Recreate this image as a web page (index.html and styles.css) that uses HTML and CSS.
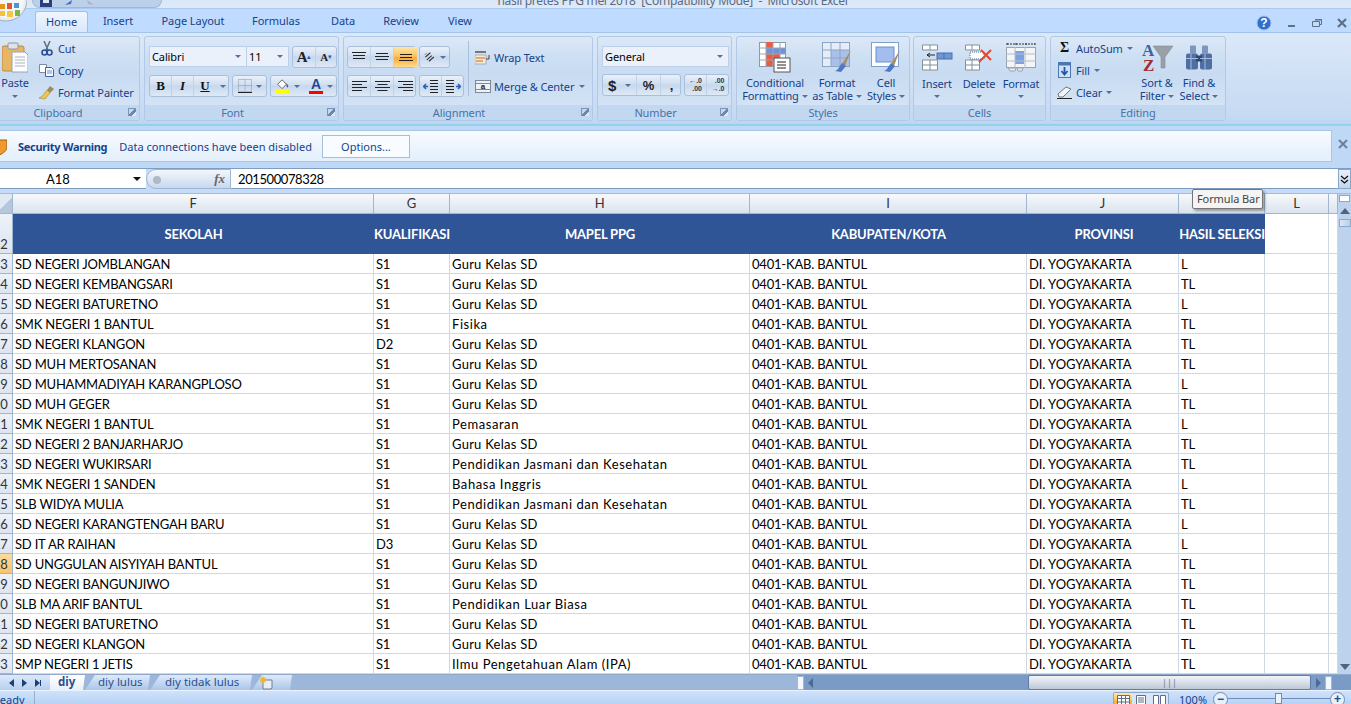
FILE: index.html
```html
<!DOCTYPE html>
<html lang="en">
<head>
<meta charset="utf-8">
<title>hasil pretes PPG mei 2018 - Microsoft Excel</title>
<link rel="stylesheet" href="styles.css">
</head>
<body>
<div class="app">
  <header class="titlebar">
    <div class="qat">
      <svg width="12" height="7" viewBox="0 0 12 7"><rect width="12" height="7" fill="#2b3f7c"/><rect x="3" y="0" width="6" height="3" fill="#dfe8f5"/></svg>
      <svg width="10" height="7" viewBox="0 0 10 7"><path d="M1 5 8 0 7 4Z" fill="#3c6fc0"/></svg>
      <svg width="10" height="7" viewBox="0 0 10 7"><path d="M8 5 1 0 2 4Z" fill="#a9b4c2"/></svg>
    </div>
    <div class="title">hasil pretes PPG mei 2018 &nbsp;[Compatibility Mode] &nbsp;- &nbsp;Microsoft Excel</div>
  </header>
  <svg class="office" width="27" height="25" viewBox="0 0 27 25"><circle cx="6" cy="0" r="21" fill="#e9edf2" stroke="#a7adb5"/><circle cx="6" cy="0" r="18" fill="#f4f6f8"/><rect x="-1" y="4" width="6" height="5" fill="#e8951e"/><rect x="-1" y="11" width="6" height="5" fill="#f3c13c"/><rect x="7" y="11" width="6" height="6" fill="#f5c743"/><rect x="15" y="10" width="5" height="6" fill="#7ab648"/><rect x="7" y="3" width="5" height="6" fill="#e3572d"/><rect x="14" y="3" width="5" height="5" fill="#4f93d8"/></svg>

  <nav class="tabbar">
    <span class="tab active">Home</span>
    <span class="tab t-insert">Insert</span>
    <span class="tab t-layout">Page Layout</span>
    <span class="tab t-formulas">Formulas</span>
    <span class="tab t-data">Data</span>
    <span class="tab t-review">Review</span>
    <span class="tab t-view">View</span>
    <div class="winbtns">
      <svg width="16" height="16" viewBox="0 0 16 16"><circle cx="8" cy="8" r="7" fill="#2f6fd0" stroke="#9fc0ea"/><text x="8" y="12" class="help">?</text></svg>
      <svg width="10" height="10" viewBox="0 0 10 10"><rect x="1" y="7" width="7" height="2" fill="#5f7186"/></svg>
      <svg width="10" height="10" viewBox="0 0 10 10"><path d="M3 1.500h6.500v5H8M.5 3.500h7v5h-7z" fill="none" stroke="#5f7186"/><rect x="3" y="1" width="7" height="1.500" fill="#5f7186"/></svg>
      <svg width="10" height="10" viewBox="0 0 10 10"><path d="M1 1l8 8M9 1 1 9" stroke="#5f7186" stroke-width="2.200"/></svg>
    </div>
  </nav>

  <section class="ribbon">
    <div class="group g-clip">
      <div class="gbody clipbody">
        <div class="bigbtn paste">
          <svg width="26" height="31" viewBox="0 0 26 31"><rect x="0" y="4" width="22" height="25" rx="2" fill="#e8b565" stroke="#b98a45"/><rect x="6" y="1" width="10" height="6" rx="1" fill="#dfe3e8" stroke="#8d96a3"/><path d="M10 10h13l3 3v17H10z" fill="#fdfdfd" stroke="#9aa5b4"/><path d="M13 15h10M13 18h10M13 21h10M13 24h10" stroke="#aab4c1"/></svg>
          <span class="btxt">Paste</span>
          <i class="caret"></i>
        </div>
        <div class="stack">
          <div class="sm"><svg width="16" height="15" viewBox="-1 0 16 15"><path d="M4 0l4 9M10 0 6 9" stroke="#5d6f86" stroke-width="1.500"/><circle cx="4.500" cy="11.500" r="2.500" fill="none" stroke="#2a4f96" stroke-width="1.600"/><circle cx="9.500" cy="11.500" r="2.500" fill="none" stroke="#2a4f96" stroke-width="1.600"/></svg><span>Cut</span></div>
          <div class="sm"><svg width="16" height="13" viewBox="0 0 16 13"><path d="M.5.500h7v8h-7z" fill="#fff" stroke="#7b8ca3"/><path d="M6.500 3.500h6l2 2v7h-8z" fill="#f3f7fc" stroke="#3f66a3"/><path d="M8 7h5M8 9h5" stroke="#6e95c9"/></svg><span>Copy</span></div>
          <div class="sm"><svg width="16" height="15" viewBox="0 0 16 15"><path d="M11 1l4 3-4 4-3-3z" fill="#9a8c63"/><path d="M8 5l3 3-5 6-6-1c3-1 4-3 8-8z" fill="#eec64e" stroke="#a68a2c" stroke-width=".6"/></svg><span>Format Painter</span></div>
        </div>
      </div>
      <div class="glabel lb">Clipboard<i class="launch"></i></div>
    </div>

    <div class="group g-font">
      <div class="gbody vbody">
        <div class="frow">
          <div class="combo c-font"><span>Calibri</span><i class="caret"></i></div>
          <div class="combo c-size"><span>11</span><i class="caret"></i></div>
          <div class="btngrp w45">
            <b class="cell grow">A<sup>▴</sup></b><b class="cell shrink">A<sup>▾</sup></b>
          </div>
        </div>
        <div class="frow">
          <div class="btngrp w80"><b class="cell c22 serif">B</b><b class="cell c22 serif it">I</b><b class="cell c22 serif un">U</b><i class="caret"></i></div>
          <div class="btngrp w35 b-border"><svg width="14" height="14" viewBox="0 0 14 14"><path d="M.5.500h13v12h-13zM7 .5v12M.5 6.500h13" fill="none" stroke="#8a95a5" stroke-dasharray="1 1"/><path d="M0 13.500h14" stroke="#222"/></svg><i class="caret"></i></div>
          <div class="btngrp w67 b-colors">
            <svg width="17" height="16" viewBox="0 0 17 16"><path d="M3 6l5-5 5 5-5 5z" fill="#fff" stroke="#555"/><path d="M13 5c2 2 3 4 1 5-1-1-1-3-1-5z" fill="#3260a8"/><rect y="12" width="16" height="4" fill="#ffff00"/></svg><i class="caret"></i>
            <span class="fcolor">A</span><i class="caret"></i>
          </div>
        </div>
      </div>
      <div class="glabel lb">Font<i class="launch"></i></div>
    </div>

    <div class="group g-align">
      <div class="gbody albody">
        <div class="alcol">
          <div class="frow">
            <div class="btngrp w68 tight">
              <b class="cell c23"><svg width="14" height="10" viewBox="0 0 14 10"><path d="M0 .5h14M1 3.500h12M1 6.500h12" stroke="#222"/></svg></b>
              <b class="cell c23"><svg width="14" height="10" viewBox="0 0 14 10"><path d="M1 1.500h12M0 4.500h14M1 7.500h12" stroke="#222"/></svg></b>
              <b class="cell c23 on"><svg width="14" height="10" viewBox="0 0 14 10"><path d="M1 2.500h12M1 5.500h12M0 8.500h14" stroke="#222"/></svg></b>
            </div>
            <div class="btngrp w31"><svg width="17" height="14" viewBox="0 0 17 14"><path d="M2 7 9 1M4 11l7-6M7 13l7-6" stroke="#333" stroke-width="1.500"/><path d="M1 4l3-3" stroke="#555"/></svg><i class="caret"></i></div>
          </div>
          <div class="frow">
            <div class="btngrp w68 tight">
              <b class="cell c23"><svg width="15" height="11" viewBox="0 0 15 11"><path d="M0 .5h15M0 3.500h10M0 6.500h15M0 9.500h10" stroke="#222"/></svg></b>
              <b class="cell c23"><svg width="15" height="11" viewBox="0 0 15 11"><path d="M0 .5h15M2.500 3.500h10M0 6.500h15M2.500 9.500h10" stroke="#222"/></svg></b>
              <b class="cell c23"><svg width="15" height="11" viewBox="0 0 15 11"><path d="M0 .5h15M5 3.500h10M0 6.500h15M5 9.500h10" stroke="#222"/></svg></b>
            </div>
            <div class="btngrp w45 tight">
              <b class="cell c22"><svg width="15" height="13" viewBox="0 0 15 13"><path d="M7 .5h8M7 3.500h8M7 6.500h8M7 9.500h8M7 12.500h8" stroke="#222"/><path d="M5 6.500H1M3 4 .5 6.500 3 9" stroke="#2a5cb0" fill="none" stroke-width="1.500"/></svg></b>
              <b class="cell c22"><svg width="15" height="13" viewBox="0 0 15 13"><path d="M0 .5h8M0 3.500h8M0 6.500h8M0 9.500h8M0 12.500h8" stroke="#222"/><path d="M10 6.500h4M12 4l2.500 2.500L12 9" stroke="#2a5cb0" fill="none" stroke-width="1.500"/></svg></b>
            </div>
          </div>
        </div>
        <div class="vsep"></div>
        <div class="alcol2">
          <div class="sm"><svg width="16" height="15" viewBox="0 0 16 15"><rect y="1" width="11" height="2" fill="#777"/><rect y="5" width="11" height="9" fill="#f6ead6" stroke="#8a8a8a" stroke-width=".6"/><path d="M1 8h9M1 11h7" stroke="#c36a1e"/><path d="M14 5v4h-3" stroke="#444" fill="none"/></svg><span>Wrap Text</span></div>
          <div class="sm"><svg width="16" height="15" viewBox="0 0 16 15"><rect x=".5" y="1.500" width="15" height="12" fill="#eef2f7" stroke="#7e8a99"/><path d="M.5 4.500h15M.5 10.500h15" stroke="#7e8a99"/><text x="8" y="10" class="a-ico">a</text></svg><span>Merge &amp; Center</span><i class="caret"></i></div>
        </div>
      </div>
      <div class="glabel lb">Alignment<i class="launch"></i></div>
    </div>

    <div class="group g-num">
      <div class="gbody vbody">
        <div class="frow"><div class="combo c-gen"><span>General</span><i class="caret"></i></div></div>
        <div class="frow">
          <div class="btngrp w79 tight"><b class="cell c34 dollar">$<i class="caret"></i></b><b class="cell c24 pct">%</b><b class="cell c21 pct">,</b></div>
          <div class="btngrp w45 tight">
            <b class="cell c22 dec"><span>←.0<br>.00</span></b><b class="cell c22 dec"><span>.00<br>→.0</span></b>
          </div>
        </div>
      </div>
      <div class="glabel lb">Number<i class="launch"></i></div>
    </div>

    <div class="group g-styles">
      <div class="gbody bigs">
        <div class="bigbtn b76">
          <svg width="32" height="31" viewBox="0 0 32 31"><rect x=".5" y=".5" width="26" height="24" fill="#fff" stroke="#8d99a8"/><rect x="7" y="0" width="7" height="6" fill="#ee5a3c"/><rect x="7" y="6" width="20" height="6" fill="#6f93d9"/><rect x="7" y="12" width="14" height="6" fill="#ee5a3c"/><rect x="7" y="18" width="7" height="6" fill="#ee5a3c"/><path d="M7 0v25M14 0v25M21 0v25M0 6h27M0 12h27M0 18h27" stroke="#9aa6b5" fill="none"/><rect x="15" y="16" width="16" height="14" fill="#fff" stroke="#555"/><path d="M18 20h9M18 23h9M18 26h9" stroke="#222"/></svg>
          <span class="btxt">Conditional<br>Formatting<i class="caret inl"></i></span>
        </div>
        <div class="bigbtn b48">
          <svg width="30" height="31" viewBox="0 0 30 31"><rect x=".5" y=".5" width="27" height="24" fill="#e5edf8" stroke="#8da4c4"/><rect x="9" y="8" width="18" height="16" fill="#a9c1e8"/><path d="M9 0v25M18 0v25M0 8h28M0 16h28" stroke="#8da4c4"/><path d="M29 8 20 22l3 2z" fill="#a78d5a"/><path d="M20 21l4 3-5 6-6-1c3-1 4-4 7-8z" fill="#4d79c7"/></svg>
          <span class="btxt">Format<br>as Table<i class="caret inl"></i></span>
        </div>
        <div class="bigbtn b48">
          <svg width="30" height="31" viewBox="0 0 30 31"><rect x=".5" y=".5" width="27" height="24" fill="#fff" stroke="#7fa0cc"/><rect x="5" y="5" width="18" height="15" fill="#a3bdee" stroke="#6b8fd0"/><path d="M29 8 20 22l3 2z" fill="#a78d5a"/><path d="M20 21l4 3-5 6-6-1c3-1 4-4 7-8z" fill="#4d79c7"/></svg>
          <span class="btxt">Cell<br>Styles<i class="caret inl"></i></span>
        </div>
      </div>
      <div class="glabel">Styles</div>
    </div>

    <div class="group g-cells">
      <div class="gbody bigs">
        <div class="bigbtn b42">
          <svg width="31" height="27" viewBox="0 0 31 27"><path d="M.5 1h15v5H.5zM8 1v5M.5 16h15v10H.5zM.5 21h15M8 16v10" fill="#fff" stroke="#848f9c"/><rect x="15" y="9" width="15" height="6" fill="#6f97d8" stroke="#4a6ea8"/><path d="M22 9v6" stroke="#4a6ea8"/><path d="M13 11H5M8 9l-3 2 3 2" stroke="#222" fill="none"/></svg>
          <span class="btxt">Insert<br><i class="caret"></i></span>
        </div>
        <div class="bigbtn b42">
          <svg width="28" height="27" viewBox="0 0 28 27"><path d="M.5 1h14v5H.5zM7 1v5M.5 16h14v10H.5zM.5 21h14M7 16v10" fill="#fff" stroke="#848f9c"/><path d="M5 8h14v7H5z" fill="#fff" stroke="#4a6ea8" stroke-dasharray="1 1"/><path d="M16 6l10 10M26 6 14 18" stroke="#e8452a" stroke-width="2"/></svg>
          <span class="btxt">Delete<br><i class="caret"></i></span>
        </div>
        <div class="bigbtn b42">
          <svg width="30" height="29" viewBox="0 0 30 29"><path d="M1 1h28M1 0v3M29 0v3M10 0v3M20 0v3" stroke="#333" stroke-dasharray="2 1"/><rect x=".5" y="4.500" width="29" height="20" fill="#f3f5f8" stroke="#9aa4b1"/><rect x="9" y="8" width="9" height="13" fill="#7ea1e4"/><path d="M9 4v21M19 4v21M0 11h30M0 18h30" stroke="#b4bcc7"/><path d="M2 25h8l-1 3H4zM11 25h6l-1 3h-4z" fill="#e8ecf2" stroke="#9aa4b1"/></svg>
          <span class="btxt">Format<br><i class="caret"></i></span>
        </div>
      </div>
      <div class="glabel">Cells</div>
    </div>

    <div class="group g-edit">
      <div class="gbody editbody">
        <div class="stack estack">
          <div class="sm"><span class="sigma">Σ</span><span>AutoSum</span><i class="caret"></i></div>
          <div class="sm"><svg width="13" height="16" viewBox="0 0 13 16"><rect x=".5" y=".5" width="12" height="15" fill="#cfe0f7" stroke="#4a77b8"/><rect x=".5" y=".5" width="12" height="3" fill="#4a77b8"/><path d="M6.500 5v7M3.500 9l3 3.500 3-3.500" stroke="#2256a8" stroke-width="1.800" fill="none"/></svg><span>Fill</span><i class="caret"></i></div>
          <div class="sm"><svg width="15" height="13" viewBox="0 0 15 13"><path d="M1 8l8-7 5 2-8 8H2z" fill="#f1f3f6" stroke="#6e7886"/><path d="M0 12.500h15" stroke="#222"/></svg><span>Clear</span><i class="caret"></i></div>
        </div>
        <div class="bigbtn b42">
          <svg width="31" height="29" viewBox="0 0 31 29"><path d="M11 3h20l-8 11v11h-4V14z" fill="#9aa0a8" stroke="#7a7f86" stroke-width=".5"/><text x="0" y="13" class="sa">A</text><text x="1" y="28" class="sz">Z</text></svg>
          <span class="btxt">Sort &amp;<br>Filter<i class="caret inl"></i></span>
        </div>
        <div class="bigbtn b42">
          <svg width="28" height="26" viewBox="0 0 28 26"><rect x="5" y="1" width="6" height="8" rx="1" fill="#7e96bd"/><rect x="17" y="1" width="6" height="8" rx="1" fill="#7e96bd"/><rect x="1" y="9" width="12" height="16" rx="2" fill="#4f6ea3"/><rect x="15" y="9" width="12" height="16" rx="2" fill="#4f6ea3"/><rect x="11" y="11" width="6" height="6" fill="#2e4773"/><path d="M1 14h12M15 14h12M6 9v16M20 9v16" stroke="#a8bddc"/></svg>
          <span class="btxt">Find &amp;<br>Select<i class="caret inl"></i></span>
        </div>
      </div>
      <div class="glabel">Editing</div>
    </div>
  </section>

  <section class="msgbar">
    <div class="msgpanel">
      <svg class="shield" width="7" height="16" viewBox="0 0 7 16"><path d="M-6 1h13v7c0 4-4 6-7 8z" fill="#ee9a2e" stroke="#a55f10"/></svg>
      <strong>Security Warning</strong>
      <span>Data connections have been disabled</span>
      <span class="optbtn">Options...</span>
    </div>
    <svg class="msgclose" width="10" height="10" viewBox="0 0 10 10"><path d="M1 1l8 8M9 1 1 9" stroke="#6d8098" stroke-width="2"/></svg>
  </section>

  <section class="fbar">
    <div class="namebox"><span>A18</span><i class="caret dark"></i></div>
    <div class="fxbtn"><i class="knob"></i><em>fx</em></div>
    <div class="finput">201500078328</div>
    <div class="fexpand"><svg width="9" height="9" viewBox="0 0 9 9"><path d="M1 1l3.500 3L8 1M1 5l3.500 3L8 5" fill="none" stroke="#111" stroke-width="1.300"/></svg></div>
  </section>

  <main class="gridwrap">
    <table class="sheet">
      <colgroup><col class="c-rh"><col class="c-f"><col class="c-g"><col class="c-h"><col class="c-i"><col class="c-j"><col class="c-k"><col class="c-l"><col></colgroup>
      <thead>
        <tr class="colhead"><th class="corner"></th><th>F</th><th>G</th><th>H</th><th>I</th><th>J</th><th>K</th><th>L</th><th></th></tr>
      </thead>
      <tbody>
        <tr class="hdr"><th class="rh"><span>12</span></th><td>SEKOLAH</td><td class="nw">KUALIFIKASI</td><td>MAPEL PPG</td><td>KABUPATEN/KOTA</td><td class="prov">PROVINSI</td><td class="nw">HASIL SELEKSI</td><td class="plain"></td><td class="plain"></td></tr>
        <tr><th class="rh"><span>13</span></th><td>SD NEGERI JOMBLANGAN</td><td>S1</td><td>Guru Kelas SD</td><td>0401-KAB. BANTUL</td><td>DI. YOGYAKARTA</td><td>L</td><td></td><td></td></tr>
        <tr><th class="rh"><span>14</span></th><td>SD NEGERI KEMBANGSARI</td><td>S1</td><td>Guru Kelas SD</td><td>0401-KAB. BANTUL</td><td>DI. YOGYAKARTA</td><td>TL</td><td></td><td></td></tr>
        <tr><th class="rh"><span>15</span></th><td>SD NEGERI BATURETNO</td><td>S1</td><td>Guru Kelas SD</td><td>0401-KAB. BANTUL</td><td>DI. YOGYAKARTA</td><td>L</td><td></td><td></td></tr>
        <tr><th class="rh"><span>16</span></th><td>SMK NEGERI 1 BANTUL</td><td>S1</td><td class="lc">Fisika</td><td>0401-KAB. BANTUL</td><td>DI. YOGYAKARTA</td><td>TL</td><td></td><td></td></tr>
        <tr><th class="rh"><span>17</span></th><td>SD NEGERI KLANGON</td><td>D2</td><td>Guru Kelas SD</td><td>0401-KAB. BANTUL</td><td>DI. YOGYAKARTA</td><td>TL</td><td></td><td></td></tr>
        <tr><th class="rh"><span>18</span></th><td>SD MUH MERTOSANAN</td><td>S1</td><td>Guru Kelas SD</td><td>0401-KAB. BANTUL</td><td>DI. YOGYAKARTA</td><td>TL</td><td></td><td></td></tr>
        <tr><th class="rh"><span>19</span></th><td>SD MUHAMMADIYAH KARANGPLOSO</td><td>S1</td><td>Guru Kelas SD</td><td>0401-KAB. BANTUL</td><td>DI. YOGYAKARTA</td><td>L</td><td></td><td></td></tr>
        <tr><th class="rh"><span>20</span></th><td>SD MUH GEGER</td><td>S1</td><td>Guru Kelas SD</td><td>0401-KAB. BANTUL</td><td>DI. YOGYAKARTA</td><td>TL</td><td></td><td></td></tr>
        <tr><th class="rh"><span>21</span></th><td>SMK NEGERI 1 BANTUL</td><td>S1</td><td class="lc">Pemasaran</td><td>0401-KAB. BANTUL</td><td>DI. YOGYAKARTA</td><td>L</td><td></td><td></td></tr>
        <tr><th class="rh"><span>22</span></th><td>SD NEGERI 2 BANJARHARJO</td><td>S1</td><td>Guru Kelas SD</td><td>0401-KAB. BANTUL</td><td>DI. YOGYAKARTA</td><td>TL</td><td></td><td></td></tr>
        <tr><th class="rh"><span>23</span></th><td>SD NEGERI WUKIRSARI</td><td>S1</td><td class="lc">Pendidikan Jasmani dan Kesehatan</td><td>0401-KAB. BANTUL</td><td>DI. YOGYAKARTA</td><td>TL</td><td></td><td></td></tr>
        <tr><th class="rh"><span>24</span></th><td>SMK NEGERI 1 SANDEN</td><td>S1</td><td class="lc">Bahasa Inggris</td><td>0401-KAB. BANTUL</td><td>DI. YOGYAKARTA</td><td>L</td><td></td><td></td></tr>
        <tr><th class="rh"><span>25</span></th><td>SLB WIDYA MULIA</td><td>S1</td><td class="lc">Pendidikan Jasmani dan Kesehatan</td><td>0401-KAB. BANTUL</td><td>DI. YOGYAKARTA</td><td>TL</td><td></td><td></td></tr>
        <tr><th class="rh"><span>26</span></th><td>SD NEGERI KARANGTENGAH BARU</td><td>S1</td><td>Guru Kelas SD</td><td>0401-KAB. BANTUL</td><td>DI. YOGYAKARTA</td><td>L</td><td></td><td></td></tr>
        <tr><th class="rh"><span>27</span></th><td>SD IT AR RAIHAN</td><td>D3</td><td>Guru Kelas SD</td><td>0401-KAB. BANTUL</td><td>DI. YOGYAKARTA</td><td>L</td><td></td><td></td></tr>
        <tr><th class="rh sel"><span>28</span></th><td>SD UNGGULAN AISYIYAH BANTUL</td><td>S1</td><td>Guru Kelas SD</td><td>0401-KAB. BANTUL</td><td>DI. YOGYAKARTA</td><td>TL</td><td></td><td></td></tr>
        <tr><th class="rh"><span>29</span></th><td>SD NEGERI BANGUNJIWO</td><td>S1</td><td>Guru Kelas SD</td><td>0401-KAB. BANTUL</td><td>DI. YOGYAKARTA</td><td>TL</td><td></td><td></td></tr>
        <tr><th class="rh"><span>30</span></th><td>SLB MA ARIF BANTUL</td><td>S1</td><td class="lc">Pendidikan Luar Biasa</td><td>0401-KAB. BANTUL</td><td>DI. YOGYAKARTA</td><td>TL</td><td></td><td></td></tr>
        <tr><th class="rh"><span>31</span></th><td>SD NEGERI BATURETNO</td><td>S1</td><td>Guru Kelas SD</td><td>0401-KAB. BANTUL</td><td>DI. YOGYAKARTA</td><td>TL</td><td></td><td></td></tr>
        <tr><th class="rh"><span>32</span></th><td>SD NEGERI KLANGON</td><td>S1</td><td>Guru Kelas SD</td><td>0401-KAB. BANTUL</td><td>DI. YOGYAKARTA</td><td>TL</td><td></td><td></td></tr>
        <tr><th class="rh"><span>33</span></th><td>SMP NEGERI 1 JETIS</td><td>S1</td><td class="lc">Ilmu Pengetahuan Alam (IPA)</td><td>0401-KAB. BANTUL</td><td>DI. YOGYAKARTA</td><td>TL</td><td></td><td></td></tr>
      </tbody>
    </table>
    <aside class="vscroll">
      <i class="vsplit"></i>
      <i class="arrow-up"></i>
      <i class="vthumb"></i>
      <i class="vspace"></i>
      <i class="arrow-down"></i>
    </aside>
  </main>
  <div class="tooltip">Formula Bar</div>

  <section class="sheetbar">
    <div class="sheetnav">
      <i class="nl"></i><i class="nr"></i><i class="ne"></i>
    </div>
    <span class="stab cur">diy</span>
    <span class="stab">diy lulus</span>
    <span class="stab">diy tidak lulus</span>
    <span class="stab newtab"><svg width="15" height="14" viewBox="0 0 15 14"><path d="M4 4h9v8l-1 1H4z" fill="#e8eef7" stroke="#6c7f98"/><path d="M4 0l1 2 2-1-1 2 2 1-2 1 1 2-2-1-1 2-1-2-2 1 1-2-2-1 2-1-1-2 2 1z" fill="#f2b330"/></svg></span>
    <div class="sbfill"></div>
    <div class="hscroll">
      <i class="hsplit"></i>
      <i class="hleft"></i>
      <div class="htrack"></div>
      <div class="hthumb"><span>|||</span></div>
      <i class="hright"></i>
      <i class="hsplit"></i>
    </div>
  </section>

  <footer class="status">
    <span class="ready">Ready</span>
    <div class="views">
      <b class="vb on"><svg width="13" height="11" viewBox="0 0 13 11"><path d="M.5.500h12v10H.5zM.5 3.500h12M.5 7h12M4.500.5v10M8.500.5v10" fill="#fff" stroke="#5c6f88"/></svg></b>
      <b class="vb"><svg width="10" height="11" viewBox="0 0 10 11"><path d="M.5.500h9v10h-9z" fill="#fff" stroke="#5c6f88"/><path d="M2 3h6M2 5h6M2 7h6" stroke="#5c6f88"/></svg></b>
      <b class="vb"><svg width="13" height="11" viewBox="0 0 13 11"><path d="M.5.500h5v10h-5zM7.500.5h5v10h-5z" fill="#fff" stroke="#5c6f88"/></svg></b>
    </div>
    <span class="zoomtxt">100%</span>
    <i class="zbtn">−</i>
    <div class="zslider"><i class="zthumb"></i></div>
    <i class="zbtn">+</i>
  </footer>
</div>
</body>
</html>
```
FILE: styles.css
```css
* { box-sizing: border-box; }
html, body { margin: 0; height: 100%; overflow: hidden; }
body { font-family: "Noto Sans", "Open Sans", sans-serif; font-size: 11px; color: #15428b; background: #bfdbff; }
.app { position: relative; width: 1351px; height: 704px; display: flex; flex-direction: column; overflow: hidden; }
i { display: block; font-style: normal; }

/* title */
.titlebar { height: 9px; flex: none; position: relative; display: flex; background: linear-gradient(#d9e7f9, #dfe9f6); border-bottom: 1px solid #a9c9f0; overflow: hidden; }
.qat { width: 130px; height: 8px; margin-left: 32px; padding-left: 7px; display: flex; gap: 12px; background: #bcd0ea; border-radius: 0 0 12px 12px; border: 1px solid #9eb8d8; border-top: 0; }
.title { position: absolute; left: 0; right: 6px; top: -7px; text-align: center; color: #5c6b80; font-size: 12px; letter-spacing: -.32px; line-height: 16px; white-space: nowrap; }
.office { position: absolute; left: 0; top: 0; z-index: 3; }

/* tabs */
.tabbar { height: 24px; flex: none; display: flex; align-items: flex-end; background: #bfdbff; border-bottom: 1px solid #a3c4ea; padding-left: 35px; position: relative; }
.tab { display: block; height: 21px; line-height: 20px; text-align: center; white-space: nowrap; font-size: 11px; letter-spacing: -.05px; }
.tab.active { width: 53px; margin-right: 10px; background: linear-gradient(#f0f6fe, #d9e8fb); border: 1px solid #a3c0e4; border-bottom: 0; border-radius: 3px 3px 0 0; }
.t-insert { width: 40px; margin-right: 17px; }
.t-layout { width: 76px; margin-right: 14px; }
.t-formulas { width: 62px; margin-right: 20px; }
.t-data { width: 32px; margin-right: 22px; }
.t-review { width: 40px; margin-right: 25px; }
.t-view { width: 28px; }
.winbtns { margin-left: auto; height: 24px; padding: 4px 4px 0 0; display: flex; gap: 15px; align-items: center; align-self: flex-start; }
.help { font: bold 12px "Liberation Sans", sans-serif; fill: #fff; text-anchor: middle; }

/* ribbon */
.ribbon { height: 92px; flex: none; display: flex; gap: 4px; padding: 3px 0 0; background: linear-gradient(#dbe8f8, #c6daf3 90%, #bdd6f4); border-bottom: 1px solid #8fd0e8; overflow: hidden; letter-spacing: -.12px; }
.group { flex: none; height: 85px; border: 1px solid #b1c9e6; border-radius: 3px; display: flex; flex-direction: column; background: linear-gradient(#dce8f7, #cddff3 25%, #c8dbf1 45%, #d9e7f7); }
.gbody { height: 68px; flex: none; }
.glabel { height: 15px; flex: 1; position: relative; background: #c1d8f0; color: #4a72a8; text-align: center; font-size: 11px; line-height: 15px; }
.glabel.lb { padding-right: 18px; }
.launch { position: absolute; right: 3px; top: 3px; width: 8px; height: 8px; border: 1px solid #7b93b4; border-width: 1px 0 0 1px; background: linear-gradient(135deg, transparent 40%, #6e87aa 40%, #6e87aa 70%, #dce8f6 70%); }
.g-clip { width: 146px; margin-left: -6px; }
.g-font { width: 195px; }
.g-align { width: 250px; }
.g-num { width: 135px; }
.g-styles { width: 174px; margin-right: -1px; }
.g-cells { width: 133px; }
.g-edit { width: 176px; }

.clipbody { display: flex; padding-left: 7px; }
.bigbtn { display: flex; flex-direction: column; align-items: center; padding-top: 5px; font-size: 11px; text-align: center; line-height: 13px; flex: none; }
.bigbtn svg { height: 31px; flex: none; }
.btxt { display: block; margin-top: 3px; white-space: nowrap; }
.paste { width: 26px; }
.paste .caret { margin-top: 6px; }
.stack { margin-left: 11px; display: flex; flex-direction: column; }
.clipbody .stack { margin-left: 11px; }
.clipbody .sm { gap: 3px; }
.clipbody .sm svg { flex: none; }
.sm { height: 22px; display: flex; align-items: center; gap: 6px; white-space: nowrap; font-size: 11px; }
.caret { width: 0; height: 0; border: 3px solid transparent; border-top: 3px solid #54719e; border-bottom: 0; flex: none; }
.caret.inl { display: inline-block; margin-left: 3px; vertical-align: 2px; }
.caret.dark { border-top-color: #111; border-width: 4px 4px 0; }

.vbody { padding: 9px 0 0 4px; display: flex; flex-direction: column; gap: 7px; }
.frow { display: flex; gap: 3px; }
.combo { height: 21px; background: #eaf1fb; border: 1px solid #bcd0e8; display: flex; align-items: center; justify-content: space-between; padding: 0 5px 0 2px; color: #000; font-size: 11px; }
.c-font { width: 97px; border-right: 0; }
.c-size { width: 43px; margin-left: -3px; }
.c-gen { width: 127px; }
.btngrp { height: 22px; border: 1px solid #a9c0dc; border-radius: 3px; display: flex; align-items: center; background: linear-gradient(#e9f1fb, #d0def0 45%, #c6d8ee 50%, #dfe9f6); padding-right: 3px; color: #222; }
.btngrp .caret { margin-left: 4px; }
.w45 { width: 45px; } .w80 { width: 80px; } .w35 { width: 35px; } .w67 { width: 67px; }
.w68 { width: 69px; } .w31 { width: 31px; } .w79 { width: 79px; }
.tight { padding-right: 0; }
.cell { height: 20px; display: flex; align-items: center; justify-content: center; border-right: 1px solid #c1d2e7; font-weight: normal; flex: none; }
.cell:last-of-type { border-right: 0; }
.c22 { width: 22px; } .c23 { width: 23px; } .c24 { width: 24px; } .c21 { width: 21px; } .c34 { width: 34px; }
.serif { font: bold 13px "Liberation Serif", serif; color: #111; }
.it { font-style: italic; }
.un { text-decoration: underline; }
.grow { width: 23px; font: bold 15px "Liberation Serif", serif; color: #222; position: relative; }
.shrink { width: 20px; font: bold 11px "Liberation Serif", serif; color: #222; }
.grow sup, .shrink sup { font: 7px "Liberation Sans", sans-serif; color: #2a5cb0; vertical-align: 6px; line-height: 0; }
.b-border { padding-left: 5px; }
.b-colors { padding-left: 4px; }
.fcolor { margin-left: 9px; width: 16px; text-align: center; font: bold 14px/13px "Liberation Sans", sans-serif; color: #234a93; border-bottom: 3px solid #f00; }
.on { background: linear-gradient(#fde6a9, #fbc35c 45%, #f9a93a 55%, #fddc8d); }

.albody { display: flex; padding: 9px 0 0 3px; }
.alcol { display: flex; flex-direction: column; gap: 7px; width: 118px; flex: none; }
.b-border svg { flex: none; }
.w31 { padding-left: 4px; }
.vsep { width: 1px; height: 55px; margin: -5px 0 0 3px; background: #a9c0dc; }
.alcol2 { margin-left: 6px; display: flex; flex-direction: column; gap: 7px; }
.alcol2 .sm { gap: 3px; }
.alcol2 .caret { margin-left: 2px; }
.a-ico { font: bold 8px "Liberation Sans", sans-serif; fill: #222; text-anchor: middle; }

.dollar { font: bold 15px "Liberation Sans", sans-serif; gap: 5px; }
.pct { font: bold 13px "Liberation Sans", sans-serif; }
.dec { font: bold 7px/8px "Liberation Sans", sans-serif; color: #333; text-align: right; }

.bigs { display: flex; }
.b76 { width: 76px; }
.b48 { width: 48px; }
.g-styles .b48 + .b48 { width: 50px; }
.b42 { width: 42px; }
.g-cells .bigs { padding-left: 2px; }
.g-cells .b42 .caret { margin: 5px auto 0; }
.g-cells .btxt { margin-top: 4px; }

.editbody { display: flex; padding-left: 6px; }
.estack { margin-left: 0; width: 79px; flex: none; }
.estack .sm { gap: 4px; }
.estack .sm svg { width: 15px; }
.sigma { width: 15px; font: bold 14px "Liberation Serif", serif; color: #111; text-align: center; }
.sa { font: bold 17px "Liberation Serif", serif; fill: #3e62a0; }
.sz { font: bold 17px "Liberation Serif", serif; fill: #9c2f2f; }

/* message bar */
.msgbar { height: 43px; flex: none; display: flex; align-items: center; background: #bfd8f6; border-top: 1px solid #a9c9f0; padding-bottom: 2px; }
.msgpanel { width: 1332px; height: 32px; display: flex; align-items: center; gap: 12px; background: linear-gradient(#f7fbff, #e3effb); border: 1px solid #a9c5e4; border-left: 0; font-size: 11px; padding-top: 1px; }
.msgpanel strong { font-size: 11px; margin-left: -1px; letter-spacing: -.3px; white-space: nowrap; }
.shield { flex: none; }
.optbtn { width: 88px; height: 23px; line-height: 21px; margin-left: -2px; text-align: center; border: 1px solid #a3bfdc; background: #f8fbff; }
.msgclose { margin-left: 6px; margin-top: -4px; }

/* formula bar */
.fbar { height: 25px; flex: none; display: flex; background: #c5dbf7; border-top: 1px solid #7f9dc2; padding-bottom: 4px; }
.namebox { width: 146px; display: flex; align-items: center; padding: 0 5px 0 46px; justify-content: space-between; color: #000; font: 13px "Lato", sans-serif; background: #fff; border-bottom: 1px solid #7f9dc2; }
.fxbtn { width: 85px; position: relative; background: linear-gradient(#f3f7fd, #c7d8ef); border-radius: 11px 0 0 11px; border: 1px solid #9fb6d3; }
.knob { position: absolute; left: 6px; top: 6px; width: 8px; height: 8px; border-radius: 50%; background: #aeb9c6; }
.fxbtn em { position: absolute; right: 5px; top: 1px; font: italic bold 13px "Liberation Serif", serif; color: #666; }
.finput { flex: 1; padding: 2px 0 0 7px; color: #000; font: 13px/16px "Lato", sans-serif; letter-spacing: -.4px; background: #fff; border-bottom: 1px solid #7f9dc2; }
.fexpand { width: 13px; display: flex; align-items: center; justify-content: center; background: linear-gradient(#e8f0fa, #c4d6ee); border: 1px solid #8ba7c8; }

/* grid */
.gridwrap { height: 481px; flex: none; position: relative; display: flex; background: #fff; overflow: hidden; border-top: 1px solid #a5bcd6; }
.sheet { width: 1338px; flex: none; table-layout: fixed; border-collapse: separate; border-spacing: 0; font: 13px/18px "Lato", sans-serif; letter-spacing: -.2px; color: #000; }
.c-rh { width: 13px; } .c-f { width: 361px; } .c-g { width: 76px; } .c-h { width: 300px; } .c-i { width: 277px; } .c-j { width: 152px; } .c-k { width: 86px; } .c-l { width: 64px; }
.colhead th { height: 20px; padding: 0; background: linear-gradient(#f7f9fc, #dbe3ee); border-right: 1px solid #9eb6ce; border-bottom: 1px solid #9eb6ce; font-weight: normal; color: #333; text-align: center; font-size: 13px; line-height: 19px; }
.corner { background: linear-gradient(135deg, #dfe8f3 50%, #b4c7dc 50%) !important; }
tbody tr { height: 20px; }
tbody td { height: 20px; padding: 1px 2px 0; border-right: 1px solid #d0d7e5; border-bottom: 1px solid #d0d7e5; white-space: nowrap; overflow: hidden; }
tbody td:nth-of-type(3) { letter-spacing: .25px; }
tbody td:nth-of-type(5) { letter-spacing: -.08px; }
tbody td.lc { letter-spacing: .56px; }
.rh { padding: 0; background: linear-gradient(#eef2f8, #dde5f0); border-right: 1px solid #9eb6ce; border-bottom: 1px solid #9eb6ce; font-weight: normal; color: #333; overflow: hidden; text-align: left; }
.rh span { display: block; margin-left: -7px; width: 20px; }
.rh.sel { background: linear-gradient(#fbdba0, #f9c46c); }
.hdr { height: 40px; }
.hdr td, .hdr td:nth-of-type(3), .hdr td:nth-of-type(5) { height: 40px; padding: 0 2px; background: #2f5597; color: #fff; font-weight: bold; text-align: center; border: 0; overflow: visible; letter-spacing: -.2px; }
.hdr td.nw { padding: 0; }
.hdr td.prov { padding-left: 4px; }
.hdr td.plain { background: #fff; border-right: 1px solid #d0d7e5; border-bottom: 1px solid #d0d7e5; }
.hdr .rh { vertical-align: bottom; }

.vscroll { width: 13px; flex: none; display: flex; flex-direction: column; align-items: center; background: #bdd2ec; }
.vsplit { width: 11px; height: 7px; background: #fff; border: 1px solid #8da8c9; margin-top: 1px; }
.arrow-up { margin-top: 6px; border: 5px solid transparent; border-bottom: 6px solid #50647e; border-top: 0; }
.vthumb { width: 12px; height: 8px; margin-top: 5px; background: linear-gradient(90deg, #dce8f6, #b9cee8); border: 1px solid #8da8c9; }
.vspace { flex: 1; }
.arrow-down { margin-bottom: 4px; border: 5px solid transparent; border-top: 6px solid #50647e; border-bottom: 0; }
.tooltip { position: absolute; left: 1192px; top: 189px; width: 71px; height: 20px; padding-left: 4px; background: #f4f4f4; border: 1px solid #767676; border-radius: 2px; box-shadow: 2px 2px 3px rgba(0,0,0,.35); color: #444; font-size: 11px; line-height: 17px; letter-spacing: -.1px; white-space: nowrap; z-index: 2; }

/* sheet tabs */
.sheetbar { height: 16px; flex: none; display: flex; align-items: stretch; background: #9db7da; color: #2a4f8f; border-top: 1px solid #8ea9cc; }
.sheetnav { width: 50px; flex: none; display: flex; align-items: center; gap: 8px; padding-left: 9px; background: linear-gradient(#dce9f9, #b7d0f0); }
.nl { border: 4px solid transparent; border-right: 5px solid #1f3f74; border-left: 0; }
.nr { border: 4px solid transparent; border-left: 5px solid #1f3f74; border-right: 0; }
.ne { border: 4px solid transparent; border-left: 5px solid #1f3f74; border-right: 0; box-shadow: 2px 0 0 -1px #1f3f74; }
.stab { height: 15px; display: block; line-height: 13px; font-size: 11.5px; text-align: left; flex: none; background: linear-gradient(#dfeafa, #aac6ea); clip-path: polygon(0 100%, 10px 0, 100% 0, calc(100% - 2px) 100%); white-space: nowrap; }
.stab.cur { width: 35px; padding-left: 8px; font-weight: bold; background: linear-gradient(#fff, #e8f0fb); clip-path: polygon(0 0, 100% 0, calc(100% - 2px) 100%, 0 100%); }
.stab:nth-of-type(2) { width: 65px; padding-left: 13px; }
.stab:nth-of-type(3) { width: 102px; padding-left: 15px; }
.stab.newtab { width: 40px; padding: 1px 0 0 7px; }
.sbfill { flex: 1; }
.hscroll { width: 554px; flex: none; display: flex; align-items: center; background: #799bc5; position: relative; }
.hsplit { width: 7px; height: 14px; background: #f4f8fd; border: 1px solid #a2b9d6; flex: none; }
.hleft { margin-left: 4px; border: 5px solid transparent; border-right: 5px solid #4e6a90; border-left: 0; flex: none; }
.htrack { width: 215px; flex: none; }
.hthumb { width: 283px; height: 15px; flex: none; background: linear-gradient(#f2f5f9, #bcc8d7); border: 1px solid #5e7ea8; border-radius: 2px; color: #6c7a8c; text-align: center; font-size: 9px; line-height: 13px; }
.hright { margin-left: 5px; margin-right: 4px; border: 5px solid transparent; border-left: 5px solid #4e6a90; border-right: 0; flex: none; }

/* status */
.status { height: 14px; flex: 1; display: flex; align-items: flex-start; background: linear-gradient(#cfe2fb, #b8d2f5); border-top: 1px solid #eaf2fd; color: #15428b; overflow: hidden; }
.ready { width: 35px; padding-top: 2px; line-height: 14px; text-indent: -7px; border-right: 1px solid #94aecd; height: 14px; white-space: nowrap; overflow: hidden; font-size: 11px; flex: none; margin-right: 1078px; }
.views { width: 56px; height: 18px; margin-top: 1px; display: flex; border: 1px solid #8ca8cb; border-radius: 2px; background: #d9e6f6; flex: none; }
.vb { width: 18px; display: flex; justify-content: center; padding-top: 2px; }
.zoomtxt { margin-left: 10px; width: 34px; font-size: 11px; line-height: 14px; padding-top: 2px; flex: none; }
.zbtn { width: 15px; height: 15px; margin-top: 1px; border-radius: 50%; border: 1px solid #6d8db8; background: #e7effa; color: #234a80; text-align: center; font: bold 12px/12px "Liberation Sans", sans-serif; flex: none; }
.zslider { width: 102px; height: 1px; margin-top: 7px; background: #6d8db8; position: relative; flex: none; }
.zthumb { position: absolute; left: 47px; top: -5px; width: 7px; height: 11px; background: #eef3fb; border: 1px solid #6d8db8; }
```
